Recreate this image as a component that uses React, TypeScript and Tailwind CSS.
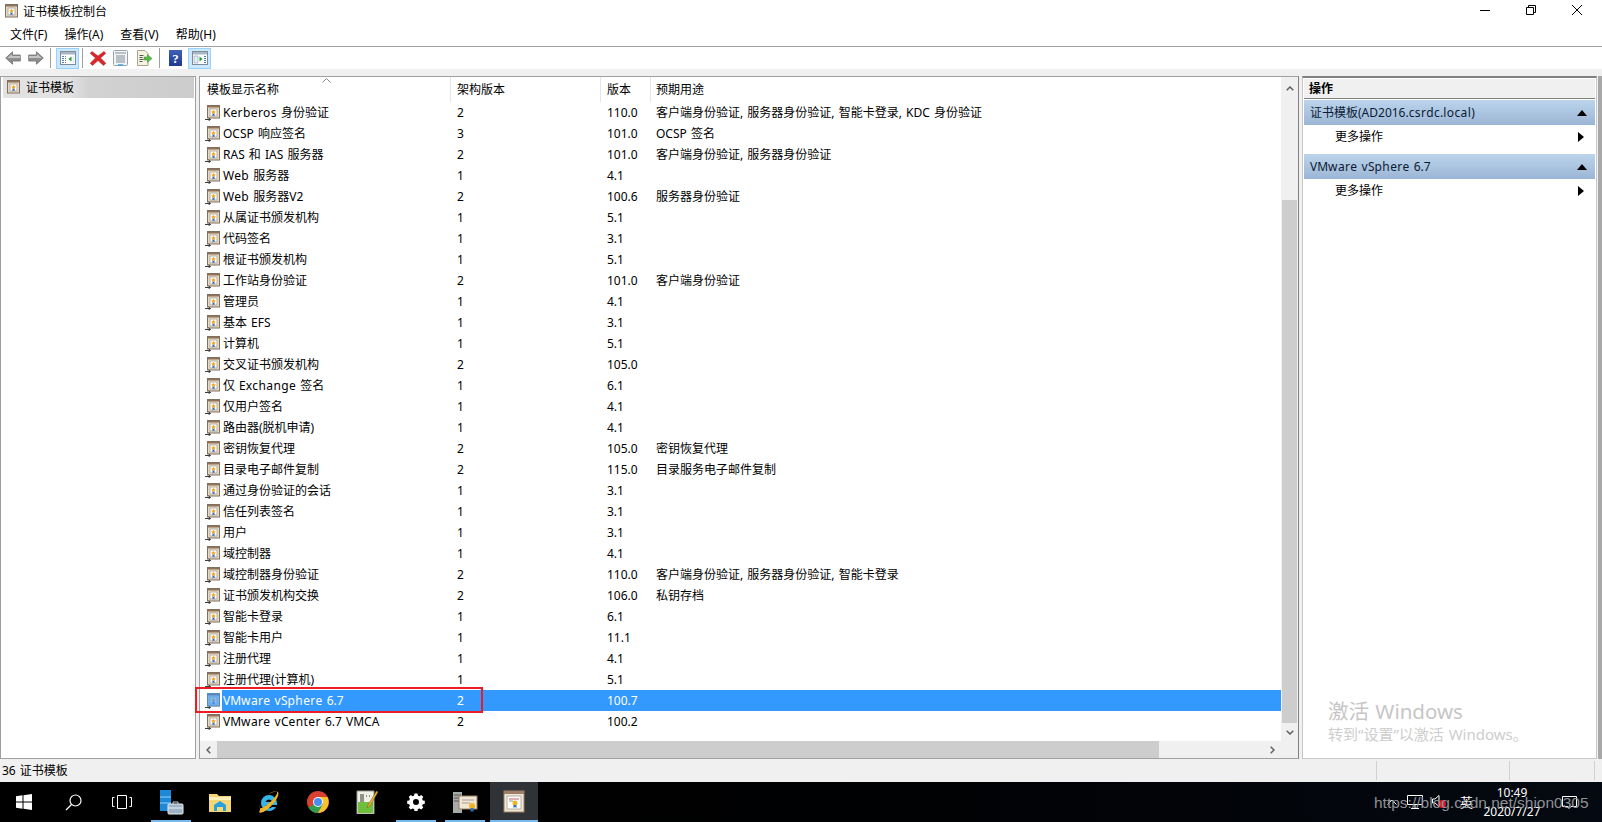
import React from "react";

const FONT = "font-['Noto_Sans','Noto_Sans_CJK_SC',sans-serif]";

function T({ s }: { s: string }) {
  const parts = s.split(/([a-z]+)/);
  return (
    <>
      {parts.map((p, i) =>
        /^[a-z]+$/.test(p) ? (
          <span key={i} className="tracking-[0.4px]">{p}</span>
        ) : (
          <span key={i}>{p}</span>
        )
      )}
    </>
  );
}

function CertIcon({ selected = false, plain = false }: { selected?: boolean; plain?: boolean }) {
  return (
    <svg width="16" height="16" viewBox="0 0 16 16" className="shrink-0">
      <rect x="2.500" y="0.500" width="12" height="12.500" fill="#e6dac3" stroke="#80705f" />
      <rect x="3" y="1" width="11" height="1.500" fill="#8f7259" />
      <rect x="5" y="4" width="7" height="7" fill="#ffffff" stroke="#a8a196" strokeWidth="0.8" />
      <path d="M8.500 4.700l.8 1.500 1.600.2-1.200 1.100.3 1.600-1.500-.8-1.500.8.300-1.600-1.200-1.100 1.600-.2z" fill="#f2a81d" />
      <path d="M7.500 8.700h2v2.600l-1-.7-1 .7z" fill="#2f62b8" />
      {!plain && <path d="M0 14.500h5.500M3.500 12.700l2 1.800-2 1.300" fill="none" stroke="#3c3c3c" strokeWidth="1" />}
      {selected && <rect x="2" y="0" width="13" height="13.500" fill="#3399ff" opacity="0.6" />}
    </svg>
  );
}

const rows: [string, string, string, string][] = [
  ["Kerberos 身份验证", "2", "110.0", "客户端身份验证, 服务器身份验证, 智能卡登录, KDC 身份验证"],
  ["OCSP 响应签名", "3", "101.0", "OCSP 签名"],
  ["RAS 和 IAS 服务器", "2", "101.0", "客户端身份验证, 服务器身份验证"],
  ["Web 服务器", "1", "4.1", ""],
  ["Web 服务器V2", "2", "100.6", "服务器身份验证"],
  ["从属证书颁发机构", "1", "5.1", ""],
  ["代码签名", "1", "3.1", ""],
  ["根证书颁发机构", "1", "5.1", ""],
  ["工作站身份验证", "2", "101.0", "客户端身份验证"],
  ["管理员", "1", "4.1", ""],
  ["基本 EFS", "1", "3.1", ""],
  ["计算机", "1", "5.1", ""],
  ["交叉证书颁发机构", "2", "105.0", ""],
  ["仅 Exchange 签名", "1", "6.1", ""],
  ["仅用户签名", "1", "4.1", ""],
  ["路由器(脱机申请)", "1", "4.1", ""],
  ["密钥恢复代理", "2", "105.0", "密钥恢复代理"],
  ["目录电子邮件复制", "2", "115.0", "目录服务电子邮件复制"],
  ["通过身份验证的会话", "1", "3.1", ""],
  ["信任列表签名", "1", "3.1", ""],
  ["用户", "1", "3.1", ""],
  ["域控制器", "1", "4.1", ""],
  ["域控制器身份验证", "2", "110.0", "客户端身份验证, 服务器身份验证, 智能卡登录"],
  ["证书颁发机构交换", "2", "106.0", "私钥存档"],
  ["智能卡登录", "1", "6.1", ""],
  ["智能卡用户", "1", "11.1", ""],
  ["注册代理", "1", "4.1", ""],
  ["注册代理(计算机)", "1", "5.1", ""],
  ["VMware vSphere 6.7", "2", "100.7", ""],
  ["VMware vCenter 6.7 VMCA", "2", "100.2", ""],
];

function PaneToggle({ right = false }: { right?: boolean }) {
  return (
    <svg width="16" height="14" viewBox="0 0 16 14">
      <rect x="0.5" y="0.5" width="15" height="13" fill="#fff" stroke="#7f8c99" />
      <rect x="1" y="1" width="14" height="2.5" fill="#a9b6c4" />
      {right ? (
        <>
          <path d="M2 5h4v7H2z" fill="#e6edf4" stroke="#8aa0b5" strokeWidth="0.6" />
          <path d="M7.5 5.5v5l3-2.5z" fill="#1fa02c" />
          <path d="M12 5.5h2M12 7.5h2M12 9.5h2M12 11.5h2" stroke="#4c7fb0" />
        </>
      ) : (
        <>
          <path d="M2 5.5h2M2 7.5h2M2 9.5h2M2 11.5h2M5 5.5h1M5 7.5h1M5 9.5h1M5 11.5h1" stroke="#4c7fb0" />
          <path d="M11.5 5.5v5l-3-2.5z" fill="#1fa02c" />
          <path d="M12.5 5h2v7h-2z" fill="#e6edf4" />
        </>
      )}
    </svg>
  );
}

function ArrowIcon({ dir }: { dir: "l" | "r" }) {
  return (
    <svg width="16" height="14" viewBox="0 0 16 14" className={dir === "r" ? "-scale-x-100" : ""}>
      <path d="M7.5 0.8L0.7 7l6.800 6.200V10h7.800V4H7.500z" fill="#8f8f8f" stroke="#6f6f6f" strokeWidth="0.8" />
      <path d="M7 3v2h8V7H2.500z" fill="#c4c4c4" />
    </svg>
  );
}

function ToolBtn({ children, active = false, w }: { children: React.ReactNode; active?: boolean; w: string }) {
  return (
    <div className={`h-[21px] flex items-center justify-center ${w} ${active ? "bg-[#cce8ff] border border-[#99d1ff]" : ""}`}>
      {children}
    </div>
  );
}

const Sep = () => <div className="w-px h-[20px] bg-[#a0a0a0]" />;

function TaskItem({ children, on = false, active = false }: { children: React.ReactNode; on?: boolean; active?: boolean }) {
  return (
    <div className={`relative w-[48px] mr-px h-full flex items-center justify-center ${active ? "bg-[#2f3236]" : ""}`}>
      {children}
      {on && <div className={`absolute bottom-0 h-[2px] bg-[#76b9ed] ${active ? "left-0 right-0" : "left-1 right-1"}`} />}
    </div>
  );
}

function ActionSection({ title }: { title: string }) {
  return (
    <div>
      <div className="h-[25px] flex items-center justify-between pl-[6px] pr-[8px] bg-gradient-to-b from-[#bcd4ec] to-[#9bb6d5] text-[#0b1b33]">
        <span><T s={title} /></span>
        <svg width="10" height="6" viewBox="0 0 10 6"><path d="M5 0l5 6H0z" fill="#000" /></svg>
      </div>
      <div className="h-[29px] flex items-center justify-between pl-[31px] pr-[11px] pb-[5px]">
        <span>更多操作</span>
        <svg width="6" height="10" viewBox="0 0 6 10"><path d="M0 0l6 5-6 5z" fill="#000" /></svg>
      </div>
    </div>
  );
}

export default function App() {
  return (
    <div className={`${FONT} w-[1602px] h-[822px] overflow-hidden flex flex-col bg-white text-[12px] text-black leading-none relative [word-spacing:1px]`}>
      {/* title bar */}
      <div className="h-[24px] flex items-center pl-[3px] shrink-0">
        <CertIcon plain />
        <span className="ml-1">证书模板控制台</span>
        <div className="ml-auto flex items-center mb-1">
          <div className="w-[46px] flex justify-center"><div className="w-[10px] h-px bg-black" /></div>
          <div className="w-[46px] flex justify-center">
            <svg width="10" height="10" viewBox="0 0 10 10"><path d="M0.5 2.5h7v7h-7zM2.5 2.5v-2h7v7h-2" fill="none" stroke="#000" /></svg>
          </div>
          <div className="w-[46px] flex justify-center">
            <svg width="10" height="10" viewBox="0 0 10 10"><path d="M0 0l10 10M10 0L0 10" stroke="#000" /></svg>
          </div>
          <div className="w-[2px]" />
        </div>
      </div>
      {/* menu */}
      <div className="h-[23px] flex items-center pl-[10px] gap-[17px] border-b border-[#a0a0a0] shrink-0">
        <span>文件(F)</span>
        <span>操作(A)</span>
        <span>查看(V)</span>
        <span>帮助(H)</span>
      </div>
      {/* toolbar */}
      <div className="h-[22px] flex items-center pl-[5px] shrink-0">
        <ArrowIcon dir="l" />
        <div className="w-[7px]" />
        <ArrowIcon dir="r" />
        <div className="w-[6px]" />
        <Sep />
        <div className="w-[5px]" />
        <ToolBtn active w="w-[23px]"><PaneToggle /></ToolBtn>
        <div className="w-[3px]" />
        <Sep />
        <div className="w-[7px]" />
        <svg width="16" height="16" viewBox="0 0 16 16">
          <path d="M2 1.500l6 4.500 6-4.500 1.800 1.800L10.500 8l5.300 5.200-2.300 2.300L8 10.500l-5.500 5-2.300-2.300L5.500 8 .2 3.300z" fill="#dc2529" stroke="#a81a1e" strokeWidth="0.5" />
        </svg>
        <div className="w-[7px]" />
        <svg width="15" height="16" viewBox="0 0 15 16">
          <rect x="0.500" y="0.500" width="14" height="15" rx="1" fill="#f2f4f6" stroke="#9aa3ab" />
          <rect x="2" y="2" width="11" height="2" fill="#b8c2cb" />
          <path d="M3 6h9M3 8h9M3 10h9M3 12h9" stroke="#6f7f8e" strokeWidth="0.9" />
          <path d="M5 15h5" stroke="#3aa0e0" strokeWidth="1.500" />
        </svg>
        <div className="w-[8px]" />
        <svg width="16" height="16" viewBox="0 0 16 16">
          <path d="M1.500 0.500h7.500l3 3V15.500h-10.500z" fill="#f7f2df" stroke="#a9a38c" />
          <path d="M3.500 5.500h4M3.500 7.500h3M3.500 9.500h4M3.500 11.500h3" stroke="#555" />
          <path d="M8 7h3.500V4.500L16 8.500l-4.500 4V10H8z" fill="#58b947" stroke="#3d8f30" strokeWidth="0.5" />
        </svg>
        <div className="w-[7px]" />
        <Sep />
        <div className="w-[9px]" />
        <div className="w-[13px] h-[16px] bg-gradient-to-b from-[#3f5fb8] to-[#1f3a8e] flex items-center justify-center">
          <span className="text-white text-[13px] font-bold font-['Liberation_Serif',serif]">?</span>
        </div>
        <div className="w-[6px]" />
        <ToolBtn active w="w-[23px]"><PaneToggle right /></ToolBtn>
      </div>
      {/* main */}
      <div className="flex-1 min-h-0 flex bg-[#f0f0f0] pt-[7px]">
        {/* tree */}
        <div className="w-[196px] shrink-0 bg-white border border-[#a0a0a0] pl-[2px] pr-px">
          <div className="h-[21px] flex items-center pl-[2px] bg-[linear-gradient(90deg,#e2e2e2_0,#e2e2e2_35%,#d2d2d2_45%,#cccccc_100%)]">
            <CertIcon plain />
            <span className="ml-[5px]">证书模板</span>
          </div>
        </div>
        {/* center */}
        <div className="ml-[3px] w-[1100px] shrink-0 flex flex-col bg-white border border-[#a0a0a0] border-r-[#808080] relative">
          <div className="flex-1 min-h-0 flex">
            <div className="flex-1 min-w-0">
              <div className="h-[25px] relative flex items-center">
                <div className="w-[251px] pl-[7px] h-full flex items-center border-r border-[#e5e5e5]">模板显示名称</div>
                <div className="w-[150px] pl-[6px] h-full flex items-center border-r border-[#e5e5e5]">架构版本</div>
                <div className="w-[50px] pl-[6px] h-full flex items-center border-r border-[#e5e5e5]">版本</div>
                <div className="pl-[5px]">预期用途</div>
                <svg width="9" height="5" viewBox="0 0 9 5" className="absolute left-[122px] top-[1px]"><path d="M.5 4.500L4.500.5l4 4" fill="none" stroke="#8a8a8a" /></svg>
              </div>
              {rows.map((r, i) => {
                const sel = r[0] === "VMware vSphere 6.7";
                return (
                  <div key={i} className="h-[21px] flex items-center">
                    <div className="w-[22px] pl-[5px] shrink-0"><CertIcon selected={sel} /></div>
                    <div className={`flex-1 h-full flex items-center ${sel ? "bg-[#3399ff] text-white" : ""}`}>
                      <div className="w-[229px] pl-[1px]"><T s={r[0]} /></div>
                      <div className="w-[150px] pl-[6px]">{r[1]}</div>
                      <div className="w-[49px] pl-[6px]">{r[2]}</div>
                      <div className="pl-[6px]"><T s={r[3]} /></div>
                    </div>
                  </div>
                );
              })}
            </div>
            {/* v scrollbar */}
            <div className="w-[17px] shrink-0 bg-[#f0f0f0] flex flex-col items-center">
              <div className="h-[16px] flex items-center justify-center mt-[3px]">
                <svg width="8" height="5" viewBox="0 0 8 5"><path d="M.7 4.300L4 1l3.300 3.300" fill="none" stroke="#606060" strokeWidth="1.500" /></svg>
              </div>
              <div className="h-[104px]" />
              <div className="w-[15px] flex-1 bg-[#cdcdcd]" />
              <div className="h-[18px] flex items-center justify-center">
                <svg width="8" height="5" viewBox="0 0 8 5"><path d="M.7.7L4 4l3.300-3.300" fill="none" stroke="#606060" strokeWidth="1.500" /></svg>
              </div>
            </div>
          </div>
          {/* h scrollbar */}
          <div className="h-[17px] shrink-0 bg-[#f0f0f0] flex items-center">
            <div className="w-[17px] flex justify-center">
              <svg width="5" height="8" viewBox="0 0 5 8"><path d="M4.300.7L1 4l3.300 3.300" fill="none" stroke="#606060" strokeWidth="1.500" /></svg>
            </div>
            <div className="h-full w-[942px] bg-[#cdcdcd]" />
            <div className="flex-1" />
            <div className="w-[17px] mr-[17px] flex justify-center">
              <svg width="5" height="8" viewBox="0 0 5 8"><path d="M.7.7L4 4 .7 7.300" fill="none" stroke="#606060" strokeWidth="1.500" /></svg>
            </div>
          </div>
          {/* red highlight */}
          <div className="absolute left-[-5px] top-[610px] w-[288px] h-[26px] border-2 border-[#ed1c24]" />
        </div>
        {/* actions */}
        <div className="ml-[3px] w-[295px] shrink-0 bg-white border border-[#c8c8c8] border-t-2 border-t-[#808080] px-px flex flex-col relative">
          <div className="h-[20px] bg-[#f0f0f0] border-b border-[#808080] flex items-center pl-[5px] font-bold mt-px">操作</div>
          <div className="h-[1px]" />
          <ActionSection title="证书模板(AD2016.csrdc.local)" />
          <ActionSection title="VMware vSphere 6.7" />
          <div className="absolute left-[25px] top-[621px] text-[#c6c6c6] text-[20.500px] leading-[24px]">激活 Windows</div>
          <div className="absolute left-[25px] top-[647px] text-[#cdcdcd] text-[15px] leading-[18px] whitespace-nowrap">转到“设置”以激活 Windows。</div>
        </div>
        <div className="flex-1 bg-[#a8a8a8] ml-px" />
      </div>
      {/* status */}
      <div className="h-[23px] shrink-0 bg-[#f0f0f0] flex items-center pl-[2px]">
        <span className="w-[1374px]">36 证书模板</span>
        <div className="w-px h-[19px] bg-[#d0d0d0]" />
        <div className="w-[132px]" />
        <div className="w-px h-[19px] bg-[#d0d0d0]" />
        <div className="w-[84px]" />
        <div className="w-px h-[19px] bg-[#d0d0d0]" />
      </div>
      {/* taskbar */}
      <div className="h-[40px] shrink-0 bg-gradient-to-r from-[#000000] to-[#050a12] flex items-center text-white relative">
        <TaskItem>
          <svg width="16" height="16" viewBox="0 0 16 16"><path d="M0 2.200L6.500 1.300V7.500H0zM7.500 1.200L16 0v7.500H7.500zM0 8.500h6.500v6.200L0 13.800zM7.500 8.500H16V16l-8.500-1.200z" fill="#fff" /></svg>
        </TaskItem>
        <TaskItem>
          <svg width="17" height="17" viewBox="0 0 17 17"><circle cx="10.500" cy="6.500" r="5.500" fill="none" stroke="#fff" strokeWidth="1.200" /><path d="M6.500 10.500L1 16" stroke="#fff" strokeWidth="1.300" /></svg>
        </TaskItem>
        <TaskItem>
          <svg width="20" height="14" viewBox="0 0 20 14"><path d="M5.500.5h9v13h-9zM2.500 2.500H.5v9h2M17.500 2.500h2v9h-2" fill="none" stroke="#fff" /></svg>
        </TaskItem>
        <TaskItem on>
          <svg width="26" height="26" viewBox="0 0 26 26">
            <rect x="2" y="1" width="11" height="21" fill="#1e88d8" />
            <path d="M2 8h11M2 14h11" stroke="#8fd0ff" />
            <rect x="10" y="15" width="15" height="10" rx="1" fill="#9fb3c4" stroke="#e8eef2" />
            <path d="M10 19h15" stroke="#e8eef2" />
            <path d="M15 15v-2h5v2" fill="none" stroke="#c4d0da" />
          </svg>
        </TaskItem>
        <TaskItem>
          <svg width="22" height="20" viewBox="0 0 22 20">
            <path d="M0 2h8l2 2h12v16H0z" fill="#f4d675" />
            <path d="M0 5h22v3H0z" fill="#fff0b8" />
            <path d="M5 19v-6l6-4 6 4v6h-3v-4H8v4z" fill="#2aa0e0" />
          </svg>
        </TaskItem>
        <TaskItem>
          <svg width="24" height="24" viewBox="0 0 24 24">
            <path d="M12 5a8 8 0 100 16c3.500 0 6-2 7-4h-4a3.800 3.800 0 01-6.500-2H20c.5-5.500-3-10-8-10zm-3.500 7a3.700 3.700 0 017 0z" fill="#34b5e8" />
            <path d="M3 20C0 24 5 24 12 18c6-5 11-13 9-16-2-2-7 0-9 2 4-2 7-3 8-2 1 2-4 8-9 12-4 3-7 5-8 4-.5-.5 0-2 0-3z" fill="#f0b323" />
          </svg>
        </TaskItem>
        <TaskItem>
          <svg width="22" height="22" viewBox="0 0 22 22">
            <circle cx="11" cy="11" r="11" fill="#d8402f" />
            <path d="M11 11L1.500 16.500A11 11 0 0011 22l5.500-9.500z" fill="#2f9e4f" />
            <path d="M11 6h9.500A11 11 0 0111 22l5-9z" fill="#f6c52c" />
            <circle cx="11" cy="11" r="5" fill="#fff" />
            <circle cx="11" cy="11" r="4" fill="#4a8df0" />
          </svg>
        </TaskItem>
        <TaskItem>
          <svg width="24" height="24" viewBox="0 0 24 24">
            <path d="M2 1h17v23H2z" fill="#eef0e6" stroke="#9a9a8a" />
            <path d="M3 12h15v11H3z" fill="#6fbf3f" />
            <path d="M6 4v8M8 4v8M11 6h1M14 6h1" stroke="#333" />
            <path d="M21.500 1L13 15l-1 3 3-2 8-14z" fill="#e8b23a" stroke="#7a5a10" strokeWidth="0.5" />
          </svg>
        </TaskItem>
        <TaskItem on>
          <svg width="18" height="18" viewBox="0 0 18 18">
            <path d="M7.500 1h3l.4 2 1.600.7 1.700-1.200 2.100 2.100-1.200 1.700.7 1.600 2 .4v3l-2 .4-.7 1.600 1.200 1.700-2.100 2.100-1.700-1.200-1.600.7-.4 2h-3l-.4-2-1.600-.7-1.700 1.200-2.100-2.100 1.200-1.700-.7-1.600-2-.4v-3l2-.4.7-1.600-1.200-1.700 2.100-2.100 1.700 1.200 1.600-.7zM9 6.500a3 3 0 100 6 3 3 0 000-6z" fill="#fff" fillRule="evenodd" transform="translate(0 -.5)" />
          </svg>
        </TaskItem>
        <TaskItem on>
          <svg width="25" height="23" viewBox="0 0 25 23">
            <rect x="0" y="1" width="9" height="21" fill="#a8aca8" />
            <path d="M1 4h7M1 7h7M1 10h7" stroke="#555" />
            <rect x="6" y="5" width="18" height="13" fill="#efe6d3" stroke="#9c7f66" />
            <path d="M9 9h12M9 12h8" stroke="#a99" />
            <circle cx="19" cy="15" r="3" fill="#f0b323" />
            <path d="M17.500 17h3v4l-1.500-1-1.500 1z" fill="#2f6fc0" />
          </svg>
        </TaskItem>
        <TaskItem on active>
          <svg width="22" height="24" viewBox="0 0 22 24">
            <rect x="1" y="1" width="20" height="21" fill="#efe6d3" stroke="#9c7f66" />
            <rect x="1" y="1" width="20" height="3" fill="#9c7f66" />
            <rect x="4" y="6" width="14" height="13" fill="#fff" stroke="#b6b0a6" />
            <path d="M6 9h10" stroke="#c06060" />
            <path d="M6 11h4" stroke="#999" />
            <circle cx="12" cy="13" r="2.500" fill="#f0b323" />
            <path d="M10.500 15h3v3l-1.500-1-1.500 1z" fill="#2f6fc0" />
          </svg>
        </TaskItem>
        {/* tray */}
        <div className="ml-auto h-full flex items-center">
          <svg width="10" height="6" viewBox="0 0 10 6" className="mr-[10px]"><path d="M.5 5.500L5 1l4.500 4.500" fill="none" stroke="#fff" /></svg>
          <svg width="16" height="14" viewBox="0 0 16 14" className="mr-[9px]"><path d="M.5.5h15v9H.5zM8 9.500V13M4 13.500h8" fill="none" stroke="#fff" /></svg>
          <div className="relative mr-[16px] w-[12px] h-[14px]">
            <svg width="8" height="12" viewBox="0 0 8 12"><path d="M7 .5v11L3 8H.5V4H3z" fill="none" stroke="#fff" /></svg>
            <div className="absolute left-[6px] top-[5px] w-[8px] h-[8px] rounded-full bg-[#e81123]" />
          </div>
          <span className="text-[13px] mr-[9px]">英</span>
          <div className="w-[60px] flex flex-col items-center gap-[7px] mr-[20px] text-[12px]">
            <span>10:49</span>
            <span>2020/7/27</span>
          </div>
          <svg width="15" height="13" viewBox="0 0 15 13" className="mr-[25px]"><path d="M.5.5h14v10H9l-2 2-1-2H.5z" fill="none" stroke="#fff" /></svg>
        </div>
        <div className="absolute left-[1374px] top-[12px] text-[15.500px] leading-[18px] text-[#8e9196] font-['Liberation_Sans',sans-serif] whitespace-nowrap [word-spacing:0]">https://blog.csdn.net/shion0305</div>
      </div>
    </div>
  );
}
